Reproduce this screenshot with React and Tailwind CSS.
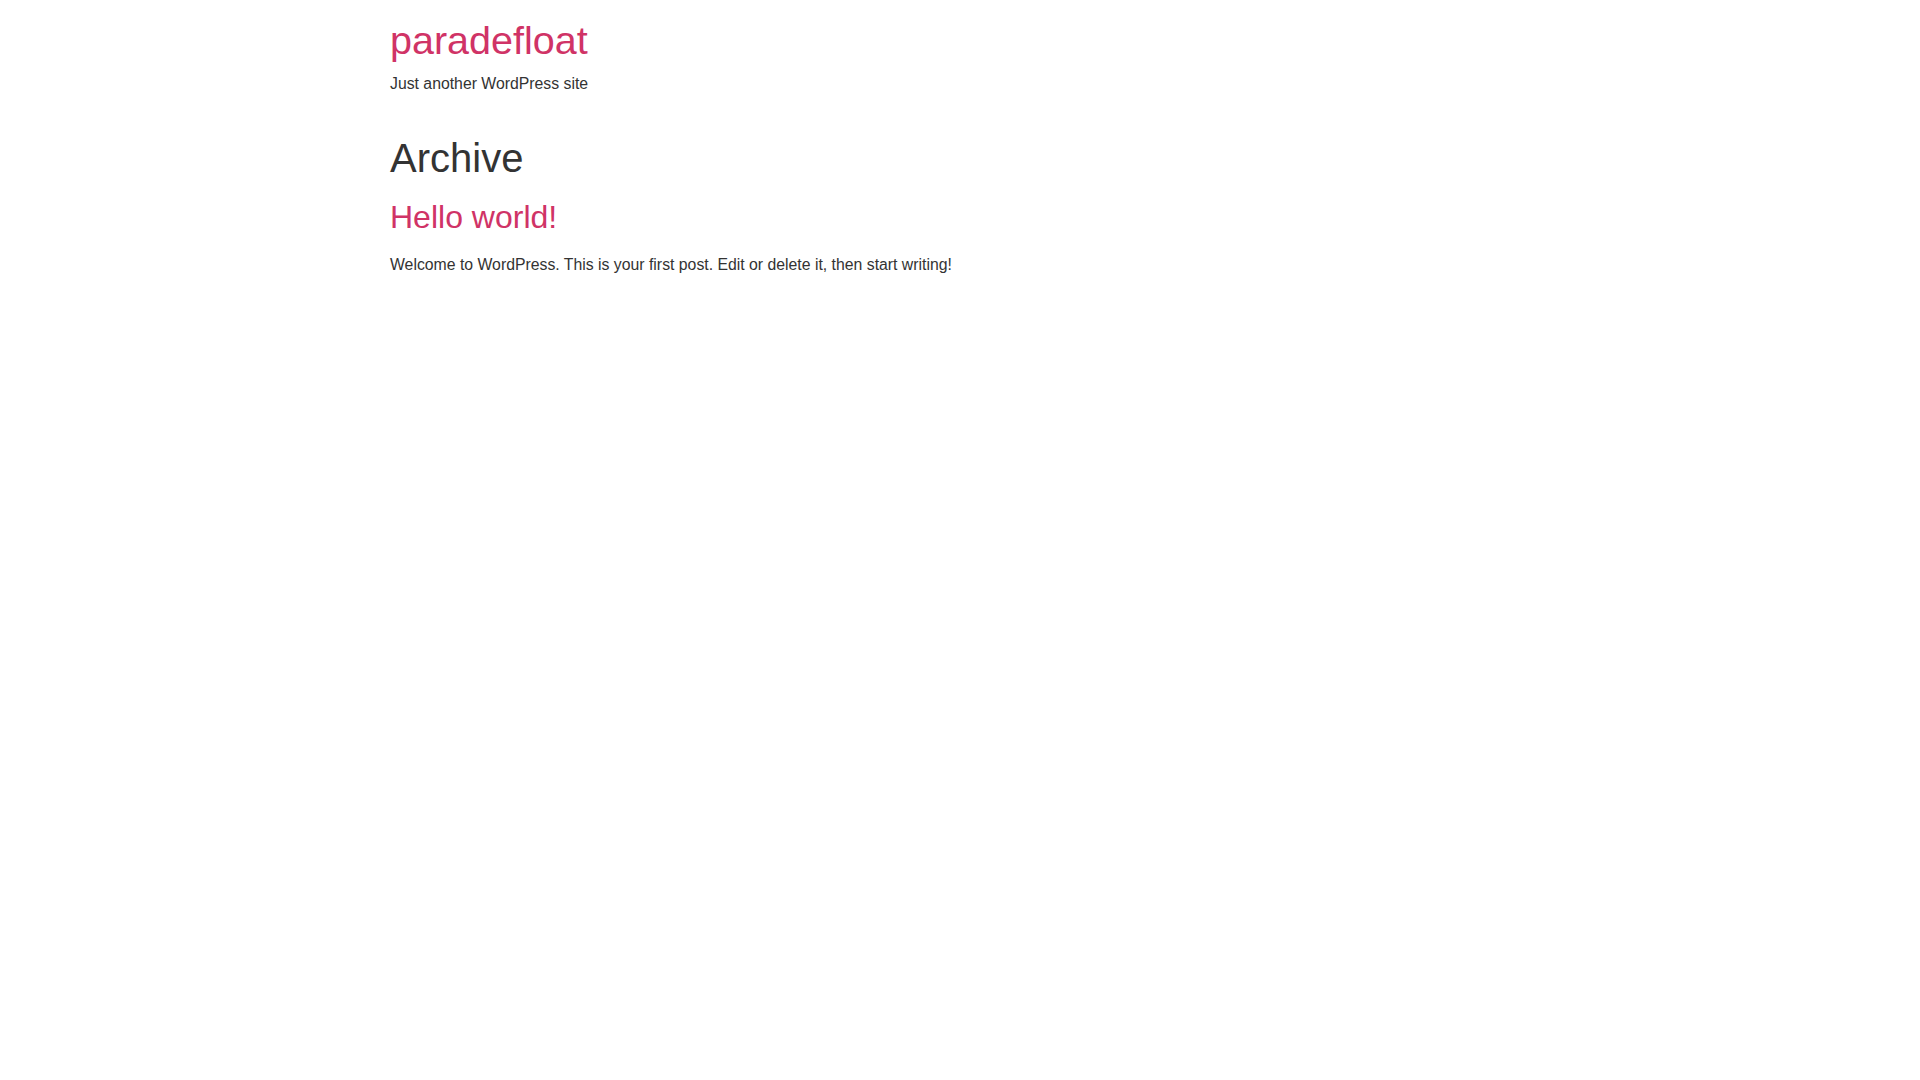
export default function App() {
  return (
    <div className="min-h-screen bg-white">
      <div className="mx-auto w-[1170px] px-[15px] font-['Liberation_Sans',Arial,sans-serif] text-[#333]">
        <header>
          <h1 className="mt-[18px] text-[39.5px] leading-[44px] text-[#d03366]">
            <a href="#">paradefloat</a>
          </h1>
          <p className="mt-[10px] text-[15.8px] leading-[24px]">Just another WordPress site</p>
        </header>
        <main>
          <h1 className="mt-[40px] text-[40px] leading-[44px]">Archive</h1>
          <article>
            <h2 className="mt-[20px] text-[32px] leading-[35px] text-[#d03366]">
              <a href="#">Hello world!</a>
            </h2>
            <p className="mt-[18px] text-[15.8px] leading-[24px]">
              Welcome to WordPress. This is your first post. Edit or delete it, then start writing!
            </p>
          </article>
        </main>
      </div>
    </div>
  );
}
